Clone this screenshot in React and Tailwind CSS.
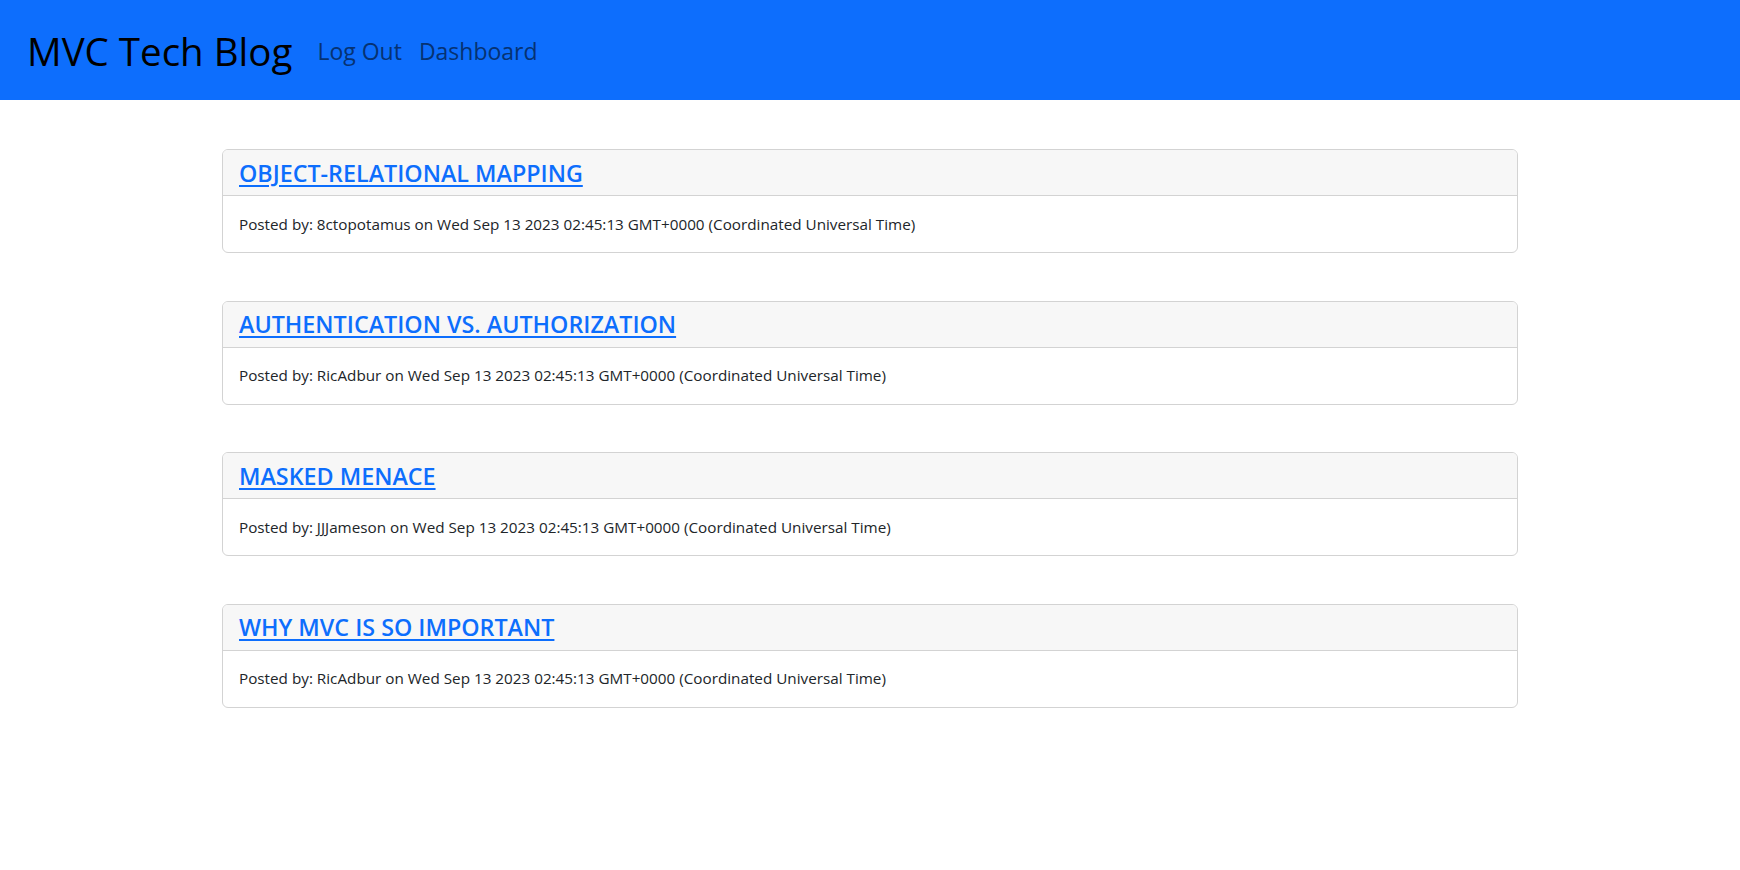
const posts = [
  { title: "OBJECT-RELATIONAL MAPPING", author: "8ctopotamus" },
  { title: "AUTHENTICATION VS. AUTHORIZATION", author: "RicAdbur" },
  { title: "MASKED MENACE", author: "JJJameson" },
  { title: "WHY MVC IS SO IMPORTANT", author: "RicAdbur" },
];

const date = "Wed Sep 13 2023 02:45:13 GMT+0000 (Coordinated Universal Time)";

function PostCard({ title, author }) {
  return (
    <div className="mt-[47.5px] first:mt-[49px] rounded-[6px] border border-[#d3d3d3] bg-white">
      <div className="h-[46px] rounded-t-[5px] border-b border-[#d3d3d3] bg-[#f7f7f7] px-4 flex items-center">
        <a href="#" className="text-[23.3px] font-semibold leading-[28px] text-[#0d6efd] underline underline-offset-[3px]">
          {title}
        </a>
      </div>
      <div className="h-[56px] px-4 flex items-center">
        <p className="text-[15.25px] text-[#212529]">
          Posted by: {author} on {date}
        </p>
      </div>
    </div>
  );
}

export default function App() {
  return (
    <div className="min-h-screen bg-white font-['Open_Sans',sans-serif]">
      {/* Navbar */}
      <header className="h-[100px] bg-[#0d6efd] flex items-center px-[27px] gap-[25px]">
        <h1 className="text-[38.5px] text-black leading-none pt-[2px]">MVC Tech Blog</h1>
        <nav className="flex items-center gap-[17px] text-[23px] text-[#063272] pt-[2px]">
          <a href="#">Log Out</a>
          <a href="#">Dashboard</a>
        </nav>
      </header>

      {/* Posts */}
      <main className="mx-auto w-[1296px]">
        {posts.map((p) => (
          <PostCard key={p.title} {...p} />
        ))}
      </main>
    </div>
  );
}
